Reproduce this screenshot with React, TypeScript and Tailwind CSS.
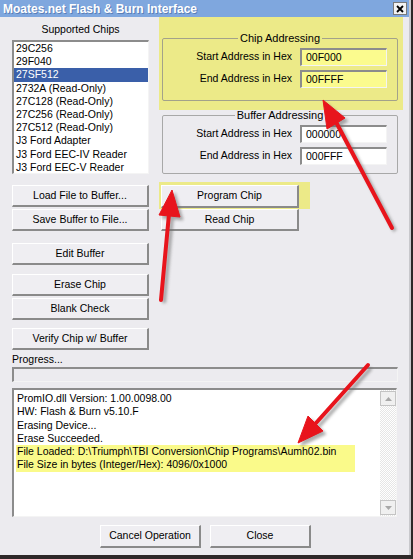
import React from 'react'

const chips = [
  '29C256',
  '29F040',
  '27SF512',
  '2732A (Read-Only)',
  '27C128 (Read-Only)',
  '27C256 (Read-Only)',
  '27C512 (Read-Only)',
  'J3 Ford Adapter',
  'J3 Ford EEC-IV Reader',
  'J3 Ford EEC-V Reader',
]

const btn =
  'flex items-center justify-center bg-[#efeef2] text-black border-t border-l border-t-white border-l-white border-b-2 border-r-2 border-b-[#8a8a8a] border-r-[#8a8a8a]'

const sunken =
  'border-t-2 border-l-2 border-t-[#8c8c8c] border-l-[#8c8c8c] border-b border-r border-b-[#f4f4f4] border-r-[#f4f4f4]'

function AddrRow({ label, value, bg }: { label: string; value: string; bg: string }) {
  return (
    <div className="flex items-center h-[18px]">
      <div className="w-[130px] text-right pr-[1px]">{label}</div>
      <div className={`ml-[7px] w-[87px] h-[18px] flex items-center pl-[4px] ${sunken} ${bg}`}>{value}</div>
    </div>
  )
}

function Arrows() {
  return (
    <svg className="absolute inset-0 pointer-events-none" width="413" height="559" viewBox="0 0 413 559">
      <defs>
        <filter id="sh" x="-20%" y="-20%" width="140%" height="140%">
          <feGaussianBlur stdDeviation="1.5" />
        </filter>
      </defs>
      <g transform="translate(3 3)" fill="#6b6b6b" stroke="#6b6b6b" opacity="0.55" filter="url(#sh)">
        <line x1="392" y1="228" x2="336" y2="122" strokeWidth="4" />
        <polygon points="323,100 345,118 327,129" />
        <line x1="161" y1="300" x2="169" y2="214" strokeWidth="4" />
        <polygon points="172,190 180,217 159,215" />
        <line x1="368" y1="365" x2="316" y2="423" strokeWidth="4" />
        <polygon points="298,443 323,431 308,416" />
      </g>
      <g fill="#e8141c" stroke="#e8141c">
        <line x1="392" y1="228" x2="336" y2="122" strokeWidth="4" strokeLinecap="round" />
        <polygon points="323,100 345,118 327,129" />
        <line x1="161" y1="300" x2="169" y2="214" strokeWidth="4" strokeLinecap="round" />
        <polygon points="172,190 180,217 159,215" />
        <line x1="368" y1="365" x2="316" y2="423" strokeWidth="4" strokeLinecap="round" />
        <polygon points="298,443 323,431 308,416" />
      </g>
    </svg>
  )
}

export default function App() {
  return (
    <div
      className="relative w-[413px] h-[559px] bg-[#2e2828] overflow-hidden text-[10.5px] text-black"
      style={{ fontFamily: '"Liberation Sans", Arial, sans-serif' }}
    >
      <div className="w-[411px] h-[555px] bg-[#ecebef] border-r-2 border-r-[#c8c8cc] flex flex-col">
        {/* title bar */}
        <div className="h-[17px] bg-[#7fa7de] flex items-center justify-between pl-[3px] pr-[2px]">
          <span className="text-white font-bold text-[12px] [text-shadow:1px_1px_0_#5a7fb8]">
            Moates.net Flash &amp; Burn Interface
          </span>
          <div className="w-[14px] h-[13px] bg-[#f2f2f2] border border-[#7a7a7a] flex items-center justify-center">
            <svg width="8" height="8" viewBox="0 0 8 8">
              <path d="M1 1 L7 7 M7 1 L1 7" stroke="#000" strokeWidth="1.8" />
            </svg>
          </div>
        </div>

        {/* top section */}
        <div className="flex items-start pl-[12px]">
          <div className="w-[137px] flex flex-col">
            <div className="h-[23px] flex items-center justify-center pt-[2px]">Supported Chips</div>
            <div className={`h-[134px] bg-white flex flex-col ${sunken}`}>
              {chips.map(c => (
                <div
                  key={c}
                  className={`h-[13.2px] leading-[13.2px] pl-[2px] ${c === '27SF512' ? 'bg-[#3a5fa9] text-white' : ''}`}
                >
                  {c}
                </div>
              ))}
            </div>
            <div className={`mt-[11px] h-[22px] ${btn}`}>Load File to Buffer...</div>
            <div className={`mt-[2px] h-[22px] ${btn}`}>Save Buffer to File...</div>
            <div className={`mt-[12px] h-[22px] ${btn}`}>Edit Buffer</div>
            <div className={`mt-[9px] h-[22px] ${btn}`}>Erase Chip</div>
            <div className={`mt-[2px] h-[22px] ${btn}`}>Blank Check</div>
            <div className={`mt-[8px] h-[22px] ${btn}`}>Verify Chip w/ Buffer</div>
          </div>

          <div className="ml-[10px] flex flex-col">
            <div className="w-[244px] bg-[#ecea88] pl-[3px] pr-[5px] pt-[14px] pb-[9px]">
              <fieldset className="w-[236px] border border-[#a3a28a] rounded-[2px] px-0 pb-[12px]">
                <legend className="mx-auto px-[2px] leading-[15px] text-[11px]">Chip Addressing</legend>
                <div className="mt-[2px] flex flex-col gap-[4px]">
                  <AddrRow label="Start Address in Hex" value="00F000" bg="bg-[#fbfb8e]" />
                  <AddrRow label="End Address in Hex" value="00FFFF" bg="bg-[#fbfb8e]" />
                </div>
              </fieldset>
            </div>
            <fieldset className="ml-[3px] mt-[-2px] w-[236px] border border-[#a8a8a8] rounded-[2px] pb-[8px]">
              <legend className="mx-auto px-[2px] leading-[15px] text-[11px]">Buffer Addressing</legend>
              <div className="mt-[2px] flex flex-col gap-[4px]">
                <AddrRow label="Start Address in Hex" value="000000" bg="bg-white" />
                <AddrRow label="End Address in Hex" value="000FFF" bg="bg-white" />
              </div>
            </fieldset>
            <div className="mt-[8px] w-[151px] h-[27px] bg-[#ecea88] pl-[2px] pt-[3px]">
              <div className={`w-[138px] h-[23px] ${btn} bg-[#e6e48c]`}>Program Chip</div>
            </div>
            <div className={`ml-[2px] w-[138px] h-[22px] ${btn}`}>Read Chip</div>
          </div>
        </div>

        {/* progress */}
        <div className="pl-[12px] mt-[2px] h-[14px] leading-[14px]">Progress...</div>
        <div className={`ml-[12px] mt-[1px] w-[386px] h-[15px] bg-[#ecebef] ${sunken}`} />

        {/* log */}
        <div className={`ml-[12px] mt-[6px] w-[385px] h-[129px] bg-white flex ${sunken}`}>
          <div className="flex-1 pl-[3px] pt-[2px] leading-[13.3px]">
            <div>PromIO.dll Version: 1.00.0098.00</div>
            <div>HW: Flash &amp; Burn v5.10.F</div>
            <div>Erasing Device...</div>
            <div>Erase Succeeded.</div>
            <div className="w-[339px] ml-[-1px] pl-[1px] bg-[#fafa8a]">
              <div>File Loaded: D:\Triumph\TBI Conversion\Chip Programs\Aumh02.bin</div>
              <div>File Size in bytes (Integer/Hex): 4096/0x1000</div>
            </div>
          </div>
          <div className="w-[16px] flex flex-col bg-[repeating-conic-gradient(#e6e6e6_0_25%,#ffffff_0_50%)] bg-[length:2px_2px]">
            <div className="mt-[1px] h-[15px] bg-[#f0f0f0] border border-[#c4c4c4] flex items-center justify-center">
              <svg width="7" height="4" viewBox="0 0 7 4">
                <path d="M0 4 L3.5 0 L7 4 Z" fill="#a8a8a8" />
              </svg>
            </div>
            <div className="flex-1" />
            <div className="mb-[1px] h-[15px] bg-[#f0f0f0] border border-[#c4c4c4] flex items-center justify-center">
              <svg width="7" height="4" viewBox="0 0 7 4">
                <path d="M0 0 L3.5 4 L7 0 Z" fill="#a8a8a8" />
              </svg>
            </div>
          </div>
        </div>

        {/* bottom buttons */}
        <div className="mt-[8px] pl-[100px] flex gap-[9px]">
          <div className={`w-[101px] h-[23px] ${btn}`}>Cancel Operation</div>
          <div className={`w-[101px] h-[23px] ${btn}`}>Close</div>
        </div>
      </div>
      <Arrows />
    </div>
  )
}
